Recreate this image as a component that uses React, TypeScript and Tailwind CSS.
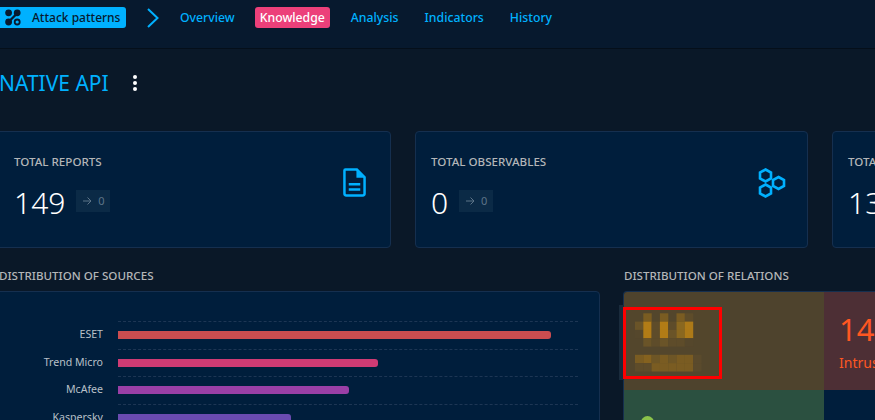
import type { ReactNode } from "react";

const font = { fontFamily: '"Noto Sans", sans-serif' };

const tabs = ["Analysis", "Indicators", "History"];

const bars = [
  { label: "ESET", width: "w-[433px]", color: "bg-[#cb4d50]" },
  { label: "Trend Micro", width: "w-[260px]", color: "bg-[#cf3b74]" },
  { label: "McAfee", width: "w-[231px]", color: "bg-[#9a3fa6]" },
  { label: "Kaspersky", width: "w-[173px]", color: "bg-[#6a4bb0]" },
];

// blurred-out label in the treemap: [column, row, colour]
const mosaic: [number, number, string][] = [
  [1, 0, "#7a5c22"], [3, 0, "#7a5c22"], [5, 0, "#7a5c22"], [6, 0, "#5e4c2a"],
  [0, 1, "#6a5428"], [1, 1, "#b27c16"], [2, 1, "#5e4c2a"], [3, 1, "#b27c16"], [4, 1, "#5e4c2a"], [5, 1, "#8a6820"], [6, 1, "#ad7a18"],
  [0, 2, "#55472c"], [1, 2, "#b27c16"], [2, 2, "#5e4c2a"], [3, 2, "#b27c16"], [4, 2, "#6a5428"], [5, 2, "#8a6820"], [6, 2, "#ad7a18"],
  [1, 3, "#6a5428"], [2, 3, "#5e4c2a"], [3, 3, "#6a5428"], [4, 3, "#5e4c2a"], [5, 3, "#5e4c2a"], [6, 3, "#55472c"],
  [0, 5, "#7a5c22"], [1, 5, "#85621f"], [2, 5, "#6e5626"], [3, 5, "#7a5c22"], [4, 5, "#6e5626"], [5, 5, "#7a5c22"], [6, 5, "#7a5c22"], [7, 5, "#5a4a2c"],
  [0, 6, "#5e4c2a"], [1, 6, "#5e4c2a"], [2, 6, "#7a5c22"], [3, 6, "#7a5c22"], [4, 6, "#7a5c22"], [5, 6, "#7a5c22"], [6, 6, "#7a5c22"], [7, 6, "#5a4a2c"],
];

function PatternIcon() {
  return (
    <svg width="16" height="17" viewBox="0 0 16 17" fill="none">
      <circle cx="3.6" cy="3.8" r="3.4" fill="#07192e" />
      <circle cx="12.2" cy="3.8" r="3.4" fill="#07192e" />
      <circle cx="3.6" cy="13" r="3.4" fill="#07192e" />
      <circle cx="12.2" cy="13" r="2.5" stroke="#07192e" strokeWidth="1.8" />
      <path d="M4 12.5L12 4.5" stroke="#07192e" strokeWidth="2.4" />
    </svg>
  );
}

function ReportIcon() {
  return (
    <svg width="23" height="29" viewBox="0 0 24 30" fill="none">
      <path
        d="M2.5 1.5H14.5L22.5 9.5V26.5C22.5 27.6 21.6 28.5 20.5 28.5H3.5C2.4 28.5 1.5 27.6 1.5 26.5V2.5C1.5 2 2 1.5 2.5 1.5Z"
        stroke="#00b1ff"
        strokeWidth="2.6"
      />
      <path d="M14 1.5V10H22.5Z" fill="#00b1ff" />
      <path d="M6 15.5H18V18H6ZM6 21H18V23.5H6Z" fill="#00b1ff" />
    </svg>
  );
}

function HexIcon() {
  return (
    <svg width="28" height="30" viewBox="0 0 28 30" fill="none" stroke="#00b1ff" strokeWidth="2.6">
      <path d="M7.5 1.5L13 4.6V10.4L7.5 13.5L2 10.4V4.6Z" />
      <path d="M20.5 9L26 12.1V17.9L20.5 21L15 17.9V12.1Z" />
      <path d="M7.5 16.5L13 19.6V25.4L7.5 28.5L2 25.4V19.6Z" />
    </svg>
  );
}

function StatCard({ title, value, icon, className, iconClass }: { title: string; value: string; icon?: ReactNode; className: string; iconClass?: string }) {
  return (
    <div className={`relative h-[117px] shrink-0 rounded border border-[#152f4f] bg-[#001e3c] pt-[21px] ${className}`}>
      <div className="text-[11.6px] leading-[18px] font-medium text-[#b4b6b8]">{title}</div>
      <div className="mt-[12px] flex items-start gap-[11px]">
        <span className="text-[30px] leading-[40px] font-light text-white">{value}</span>
        {icon && (
          <span className="mt-[7px] flex h-[22px] w-[34px] items-center justify-center gap-[6px] bg-[#0b2a46] text-[11px] text-[#5d7488]">
            <svg width="10" height="10" viewBox="0 0 10 10" fill="none" stroke="#5d7488" strokeWidth="1">
              <path d="M1 5H9M5.5 1.5L9 5L5.5 8.5" />
            </svg>
            0
          </span>
        )}
      </div>
      {icon && <div className={`absolute top-[36px] ${iconClass}`}>{icon}</div>}
    </div>
  );
}

export default function App() {
  return (
    <div className="h-[420px] w-[875px] overflow-hidden bg-[#0a1828]" style={font}>
      <header className="flex h-[49px] items-start border-b border-[#050f1a] bg-[#07192e] pt-[7px]">
        <div className="ml-[-2px] flex h-[21px] w-[128px] items-center rounded-[3px] bg-[#00b1ff] pl-[7px] text-[12px] font-medium text-[#07192e]">
          <PatternIcon />
          <span className="ml-[11px]">Attack patterns</span>
        </div>
        <svg className="ml-[20px] mt-[1px]" width="14" height="20" viewBox="0 0 14 20" fill="none" stroke="#00b1ff" strokeWidth="2">
          <path d="M2 1L11.5 10L2 19" />
        </svg>
        <span className="ml-[20px] text-[12.25px] leading-[21px] font-medium text-[#00b1ff]">Overview</span>
        <span className="ml-[20px] h-[21px] rounded-[3px] bg-[#ec407a] px-[5px] text-[12.25px] leading-[21px] font-medium text-white">Knowledge</span>
        <div className="ml-[21px] flex gap-[26px] text-[12.25px] leading-[21px] font-medium text-[#00b1ff]">
          {tabs.map((tab) => (
            <span key={tab}>{tab}</span>
          ))}
        </div>
      </header>

      <div className="flex h-[82px] items-center pb-[14px]">
        <h1 className="ml-[-1px] text-[21px] leading-[28px] font-normal text-[#00b1ff]">NATIVE API</h1>
        <svg className="ml-[23px]" width="6" height="18" viewBox="0 0 6 18" fill="white">
          <circle cx="3" cy="3" r="2" />
          <circle cx="3" cy="9" r="2" />
          <circle cx="3" cy="15" r="2" />
        </svg>
      </div>

      <div className="flex gap-[24px]">
        <StatCard title="TOTAL REPORTS" value="149" icon={<ReportIcon />} iconClass="right-[24px]" className="ml-[-8px] w-[399px] pl-[21px]" />
        <StatCard title="TOTAL OBSERVABLES" value="0" icon={<HexIcon />} iconClass="right-[21px]" className="w-[393px] pl-[15px]" />
        <StatCard title="TOTAL" value="13" className="w-[100px] pl-[15px]" />
      </div>

      <div className="mt-[19px] flex">
        <section className="w-[623px] shrink-0">
          <div className="ml-[-1px] text-[11.6px] leading-[18px] font-medium text-[#b4b6b8]">DISTRIBUTION OF SOURCES</div>
          <div className="mt-[6px] ml-[-9px] h-[200px] w-[609px] rounded border border-[#152f4f] bg-[#001e3c] pt-[29px] pr-[21px]">
            {bars.map((bar) => (
              <div key={bar.label} className="flex h-[27.6px]">
                <div className="w-[111px] shrink-0 pt-[2px] text-right text-[10.6px] leading-[22px] text-[#b8c0c8]">{bar.label}</div>
                <div className="ml-[15px] flex-1 border-t border-dashed border-[#1d3654] pt-[9px]">
                  <div className={`h-[8px] rounded-r-[3px] ${bar.width} ${bar.color}`} />
                </div>
              </div>
            ))}
          </div>
        </section>

        <section className="flex-1">
          <div className="ml-[1px] text-[11.6px] leading-[18px] font-medium text-[#b4b6b8]">DISTRIBUTION OF RELATIONS</div>
          <div className="mt-[6px] h-[200px] overflow-hidden rounded-tl border-t border-l border-[#152f4f] bg-[#001e3c]">
            <div className="flex h-[98px]">
              <div className="w-[200px] shrink-0 bg-[#4e432d]" />
              <div className="flex-1 bg-[#4d2f35] pl-[15px] pt-[19px] text-[#ff5722]">
                <div className="text-[31px] leading-[36px]">14</div>
                <div className="mt-[7px] text-[14px] leading-[18px]">Intrusion</div>
              </div>
            </div>
            <div className="relative h-[100px] w-[200px] bg-[#2b5040]">
              <div className="absolute left-[17px] top-[26px] h-[13px] w-[13px] rounded-full bg-[#8bc34a]" />
            </div>
          </div>
        </section>
      </div>

      {/* redaction box sits on top of the treemap and hangs over its left edge */}
      <div className="absolute left-[619px] top-[305px] h-[75px] w-[5px] bg-[#1a2b3c]" />
      <div className="absolute left-[623px] top-[307px] h-[72px] w-[99px] border-[3px] border-[#ff0000] bg-[#53462c]">
        <svg width="93" height="66" viewBox="0 0 93 66">
          {mosaic.map(([col, row, color]) => (
            <rect key={`${col}-${row}`} x={9 + col * 8.3} y={3.3 + row * 8.3} width="8.4" height="8.4" fill={color} />
          ))}
        </svg>
      </div>
    </div>
  );
}
